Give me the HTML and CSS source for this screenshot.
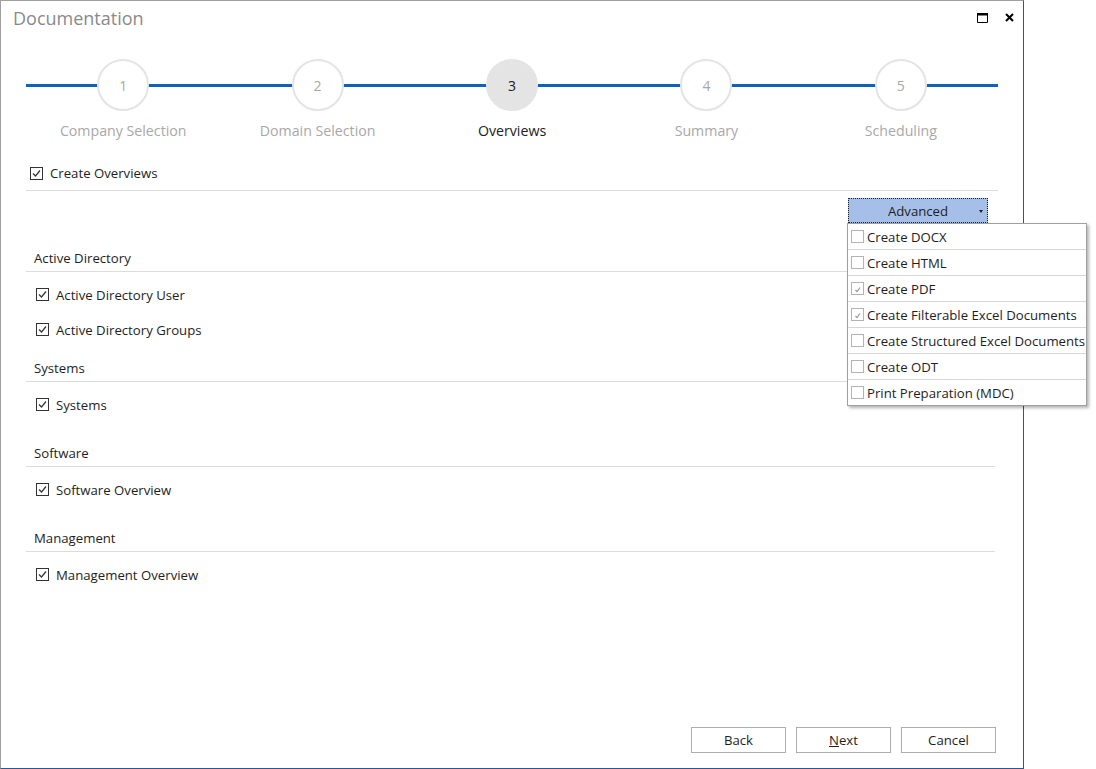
FILE: index.html
```html
<!DOCTYPE html>
<html lang="en">
<head>
    <meta charset="UTF-8">
    <title>Documentation</title>
    <link rel="stylesheet" href="styles.css">
</head>
<body>
    <div class="window">
        <div class="titlebar">
            <span class="title">Documentation</span>
            <div class="controls">
                <svg class="ctl" width="11" height="10" viewBox="0 0 11 10"><path d="M0.5 1.5h10v8h-10z M0.5 1h10" fill="none" stroke="#000" stroke-width="1"/><rect x="0" y="0" width="11" height="2.5" fill="#000"/></svg>
                <svg class="ctl" width="9" height="9" viewBox="0 0 9 9"><path d="M1 1l7 7M8 1l-7 7" stroke="#000" stroke-width="2"/></svg>
            </div>
        </div>

        <div class="content">
            <div class="stepper">
                <div class="step"><div class="step-num">1</div><div class="step-label">Company Selection</div></div>
                <div class="step"><div class="step-num">2</div><div class="step-label">Domain Selection</div></div>
                <div class="step active"><div class="step-num">3</div><div class="step-label">Overviews</div></div>
                <div class="step"><div class="step-num">4</div><div class="step-label">Summary</div></div>
                <div class="step"><div class="step-num">5</div><div class="step-label">Scheduling</div></div>
            </div>

            <div class="master">
                <svg class="cb" viewBox="0 0 13 13"><rect x="0.5" y="0.5" width="12" height="12"/><path d="M3 6.5l2.5 2.5L10 3.5"/></svg>
                <span>Create Overviews</span>
            </div>

            <div class="toolbar">
                <div class="advanced">
                    Advanced
                    <div class="menu">
                        <div class="menu-item"><svg class="cb" viewBox="0 0 13 13"><rect x="0.5" y="0.5" width="12" height="12"/></svg>Create DOCX</div>
                        <div class="menu-item"><svg class="cb" viewBox="0 0 13 13"><rect x="0.5" y="0.5" width="12" height="12"/></svg>Create HTML</div>
                        <div class="menu-item"><svg class="cb" viewBox="0 0 13 13"><rect x="0.5" y="0.5" width="12" height="12"/><path d="M4.5 8l1.5 1.5 3-4"/></svg>Create PDF</div>
                        <div class="menu-item"><svg class="cb" viewBox="0 0 13 13"><rect x="0.5" y="0.5" width="12" height="12"/><path d="M4.5 8l1.5 1.5 3-4"/></svg>Create Filterable Excel Documents</div>
                        <div class="menu-item"><svg class="cb" viewBox="0 0 13 13"><rect x="0.5" y="0.5" width="12" height="12"/></svg>Create Structured Excel Documents</div>
                        <div class="menu-item"><svg class="cb" viewBox="0 0 13 13"><rect x="0.5" y="0.5" width="12" height="12"/></svg>Create ODT</div>
                        <div class="menu-item"><svg class="cb" viewBox="0 0 13 13"><rect x="0.5" y="0.5" width="12" height="12"/></svg>Print Preparation (MDC)</div>
                    </div>
                </div>
            </div>

            <div class="sections">
                <div class="section">
                    <div class="section-title">Active Directory</div>
                    <div class="item-list">
                        <div class="item"><svg class="cb" viewBox="0 0 13 13"><rect x="0.5" y="0.5" width="12" height="12"/><path d="M3 6.5l2.5 2.5L10 3.5"/></svg>Active Directory User</div>
                        <div class="item"><svg class="cb" viewBox="0 0 13 13"><rect x="0.5" y="0.5" width="12" height="12"/><path d="M3 6.5l2.5 2.5L10 3.5"/></svg>Active Directory Groups</div>
                    </div>
                </div>
                <div class="section">
                    <div class="section-title">Systems</div>
                    <div class="item-list">
                        <div class="item"><svg class="cb" viewBox="0 0 13 13"><rect x="0.5" y="0.5" width="12" height="12"/><path d="M3 6.5l2.5 2.5L10 3.5"/></svg>Systems</div>
                    </div>
                </div>
                <div class="section">
                    <div class="section-title">Software</div>
                    <div class="item-list">
                        <div class="item"><svg class="cb" viewBox="0 0 13 13"><rect x="0.5" y="0.5" width="12" height="12"/><path d="M3 6.5l2.5 2.5L10 3.5"/></svg>Software Overview</div>
                    </div>
                </div>
                <div class="section">
                    <div class="section-title">Management</div>
                    <div class="item-list">
                        <div class="item"><svg class="cb" viewBox="0 0 13 13"><rect x="0.5" y="0.5" width="12" height="12"/><path d="M3 6.5l2.5 2.5L10 3.5"/></svg>Management Overview</div>
                    </div>
                </div>
            </div>

            <div class="footer">
                <button class="btn">Back</button>
                <button class="btn"><u>N</u>ext</button>
                <button class="btn">Cancel</button>
            </div>
        </div>
    </div>
</body>
</html>
```

FILE: styles.css
```css
body {
    margin: 0;
    font-family: "Open Sans", "Noto Sans", sans-serif;
    font-size: 13.2px;
    color: #1e1e1e;
    background: #fff;
}
.window {
    width: 1024px;
    height: 769px;
    box-sizing: border-box;
    border-top: 1px solid #9f9f9f;
    border-left: 1px solid #9f9f9f;
    border-right: 1px solid #2b5797;
    border-bottom: 1px solid #2b5797;
    display: flex;
    flex-direction: column;
}
.titlebar {
    height: 33px;
    display: flex;
    align-items: center;
    padding-left: 12px;
    padding-right: 9px;
}
.title {
    flex: 1;
    font-size: 18px;
    color: #8a8a8a;
}
.controls {
    display: flex;
    align-items: center;
    gap: 17px;
}
.content {
    flex: 1;
    display: flex;
    flex-direction: column;
    padding: 0 25px;
}

/* stepper */
.stepper {
    display: flex;
    position: relative;
    margin-top: 25px;
}
.stepper::before {
    content: '';
    position: absolute;
    left: 0;
    right: 0;
    top: 25px;
    height: 3px;
    background: #0f63b7;
}
.step {
    flex: 1;
    display: flex;
    flex-direction: column;
    align-items: center;
    position: relative;
}
.step-num {
    width: 52px;
    height: 52px;
    box-sizing: border-box;
    border-radius: 50%;
    border: 2px solid #e4e4e4;
    background: #fff;
    display: flex;
    align-items: center;
    justify-content: center;
    font-size: 14px;
    color: #a8a8a8;
}
.step-label {
    margin-top: 10px;
    line-height: 20px;
    font-size: 14.2px;
    color: #a8a8a8;
}
.step.active .step-num {
    background: #e4e4e4;
    color: #222;
}
.step.active .step-label {
    color: #222;
}

/* checkboxes */
.cb {
    width: 13px;
    height: 13px;
    flex: none;
}
.cb rect {
    fill: #fff;
    stroke: #333;
}
.cb path {
    fill: none;
    stroke: #333;
    stroke-width: 1.2;
}

.master {
    display: flex;
    align-items: center;
    gap: 7px;
    height: 24px;
    margin-top: 20px;
    padding: 0 0 5px 4px;
    border-bottom: 1px solid #dcdcdc;
}

/* advanced dropdown */
.toolbar {
    display: flex;
    justify-content: flex-end;
    margin-top: 7px;
    padding-right: 10px;
}
.advanced {
    position: relative;
    width: 140px;
    height: 25px;
    box-sizing: border-box;
    background: #a6bfe9;
    border: 1px dotted #222;
    display: flex;
    align-items: center;
    justify-content: center;
}
.advanced::after {
    content: '';
    position: absolute;
    right: 4px;
    top: 11px;
    border-left: 2px solid transparent;
    border-right: 2px solid transparent;
    border-top: 3px solid #222;
}
.menu {
    position: absolute;
    left: -2px;
    top: 24px;
    width: 240px;
    box-sizing: border-box;
    background: #fff;
    border: 1px solid #a0a0a0;
    box-shadow: 2px 2px 3px rgba(0, 0, 0, 0.3);
    z-index: 2;
}
.menu-item {
    height: 25px;
    display: flex;
    align-items: center;
    gap: 3px;
    padding-left: 3px;
    white-space: nowrap;
    border-bottom: 1px solid #d6d6d6;
}
.menu-item:last-child {
    border-bottom: none;
}
.menu .cb rect {
    stroke: #b3b3b3;
}
.menu .cb path {
    stroke: #9a9a9a;
}

/* sections */
.sections {
    margin-top: 25px;
}
.section {
    min-height: 85px;
    box-sizing: border-box;
    padding-bottom: 11px;
}
.section-title {
    line-height: 20px;
    padding: 0 0 3px 8px;
    margin-right: 3px;
    border-bottom: 1px solid #dcdcdc;
}
.item-list {
    padding: 5px 0 0 10px;
}
.item {
    height: 35px;
    display: flex;
    align-items: center;
    gap: 7px;
}

/* footer */
.footer {
    margin-top: auto;
    display: flex;
    justify-content: flex-end;
    gap: 10px;
    padding: 0 2px 15px 0;
}
.btn {
    width: 95px;
    height: 26px;
    background: #fff;
    border: 1px solid #adadad;
    font-family: inherit;
    font-size: 13.2px;
    color: #1e1e1e;
    padding: 0;
}
```
